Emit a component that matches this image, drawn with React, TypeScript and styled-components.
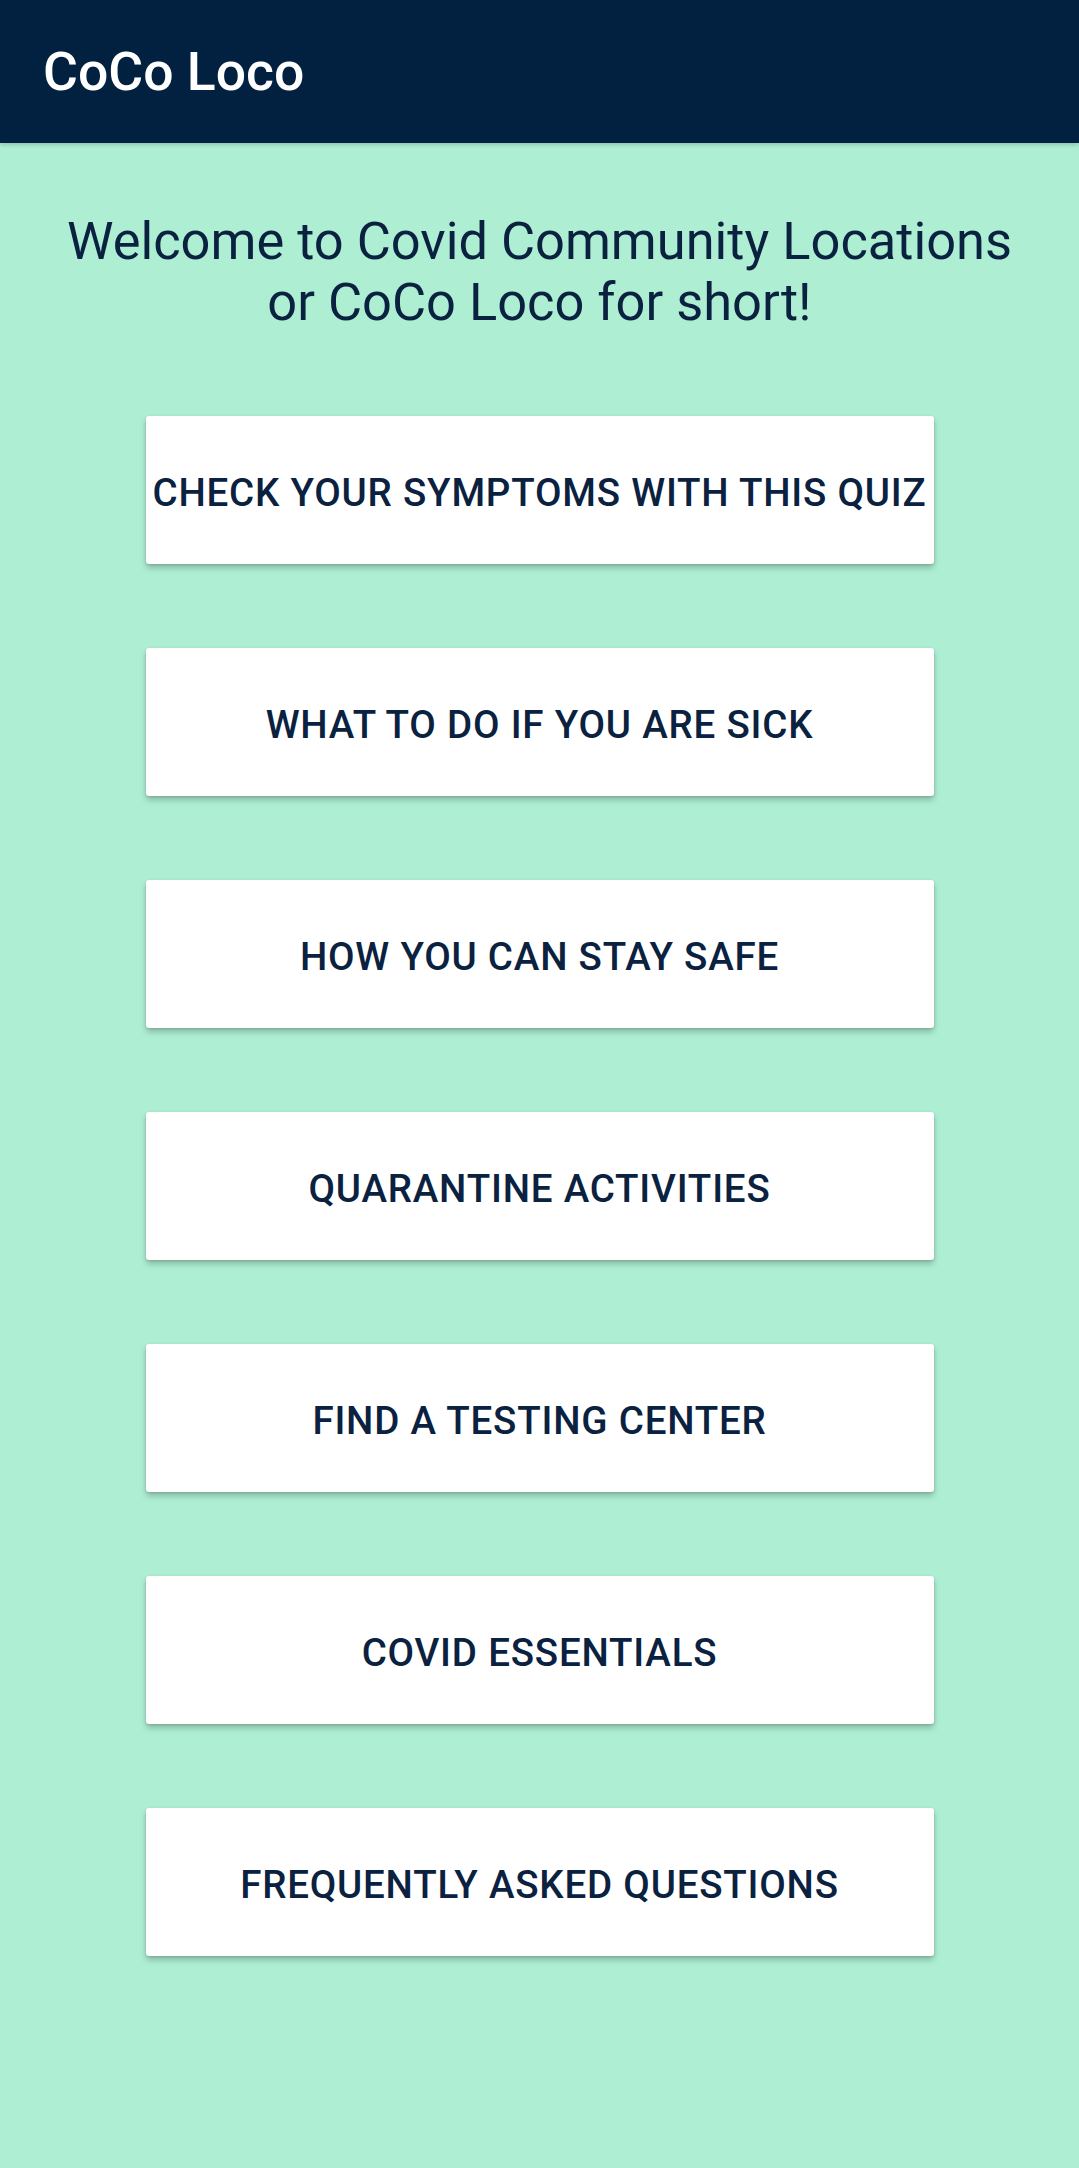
import React from "react";
import styled, { createGlobalStyle } from "styled-components";

const GlobalStyle = createGlobalStyle`
  html, body {
    margin: 0;
    padding: 0;
    background: #aeefd3;
  }
  body {
    font-family: Roboto, "Noto Sans", "Liberation Sans", sans-serif;
  }
`;

const Page = styled.div`
  min-height: 2168px;
  background: #aeefd3;
  display: flex;
  flex-direction: column;
`;

const AppBar = styled.header`
  height: 143px;
  background: #022140;
  display: flex;
  align-items: center;
  padding-left: 43px;
  box-sizing: border-box;
  box-shadow: 0 2px 4px rgba(0, 0, 0, 0.18);
  position: relative;
  z-index: 1;
`;

const AppTitle = styled.h1`
  margin: 0;
  font-family: Roboto, "Liberation Sans", sans-serif;
  font-weight: 500;
  font-size: 53.5px;
  color: #ffffff;
`;

const Content = styled.main`
  display: flex;
  flex-direction: column;
  align-items: center;
  padding-top: 68px;
`;

const Welcome = styled.p`
  margin: 0 0 83px;
  font-family: Roboto, "Liberation Sans", sans-serif;
  font-weight: 400;
  font-size: 52.4px;
  line-height: 61px;
  color: #0a2140;
  text-align: center;
`;

const ButtonList = styled.nav`
  display: flex;
  flex-direction: column;
  gap: 84px;
  width: 788px;
`;

const MenuButton = styled.button`
  height: 148px;
  width: 100%;
  border: none;
  border-radius: 3px;
  background: #ffffff;
  box-shadow: 0 4px 6px rgba(0, 0, 0, 0.22), 0 1px 3px rgba(0, 0, 0, 0.12);
  font-family: Roboto, "Liberation Sans", sans-serif;
  font-weight: 500;
  font-size: 38.5px;
  letter-spacing: 0.8px;
  text-transform: uppercase;
  color: #0a2140;
  cursor: pointer;
  padding: 5px 0 0;
  white-space: nowrap;
`;

const items = [
  "Check your symptoms with this quiz",
  "What to do if you are sick",
  "How you can stay safe",
  "Quarantine activities",
  "Find a testing center",
  "Covid essentials",
  "Frequently asked questions",
];

export default function App() {
  return (
    <>
      <GlobalStyle />
      <Page>
        <AppBar>
          <AppTitle>CoCo Loco</AppTitle>
        </AppBar>
        <Content>
          <Welcome>
            Welcome to Covid Community Locations
            <br />
            or CoCo Loco for short!
          </Welcome>
          <ButtonList>
            {items.map((label) => (
              <MenuButton key={label}>{label}</MenuButton>
            ))}
          </ButtonList>
        </Content>
      </Page>
    </>
  );
}
